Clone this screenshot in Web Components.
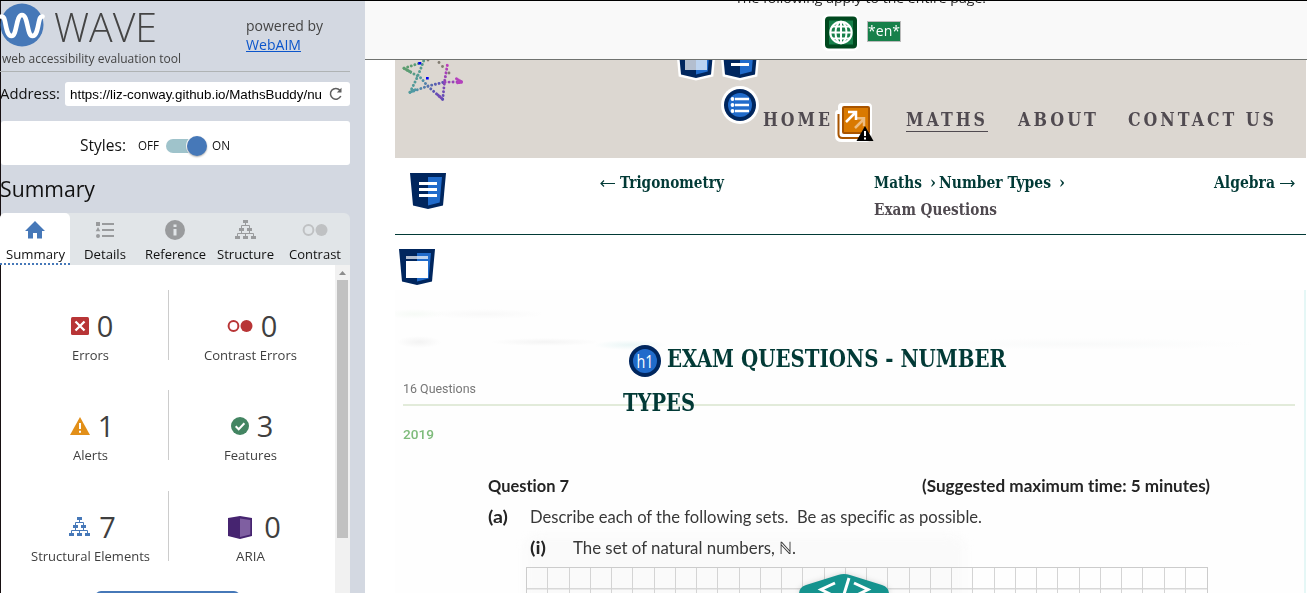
<!DOCTYPE html>
<html lang="en">
<head>
<meta charset="utf-8">
<title>WAVE Web Accessibility Evaluation Tool</title>
<style>
html,body{margin:0;height:100%;overflow:hidden;background:#fff}
body{font-family:"Open Sans","Liberation Sans",sans-serif;color:#111}
</style>
</head>
<body>
<wave-app></wave-app>
<script>
const shadow=(el,html)=>{const t=document.createElement('template');t.innerHTML=html;el.attachShadow({mode:'open'}).appendChild(t.content.cloneNode(true));};

/* A single line of text, condensed or expanded to the width in its "w" attribute. */
class FitText extends HTMLElement{
  connectedCallback(){
    if(this.shadowRoot)return;
    shadow(this,`<style>:host{display:inline-block;white-space:pre;flex:none}span{display:inline-block;transform-origin:0 50%;white-space:pre}:host([line]) span{text-decoration:underline}</style><span><slot></slot></span>`);
    const w=+this.getAttribute('w'),s=this.shadowRoot.querySelector('span');
    const n=s.getBoundingClientRect().width;
    this.style.width=w+'px';
    s.style.transform='scaleX('+w/n+')';
  }
}

const tree='<path d="M9 0h5v3H9zM5 8h5v3H5zM13 8h5v3h-5zM1 16h5v3H1zM9 16h5v3H9zM17 16h5v3h-5z"/><path d="M11.500 3v2.500M7.500 8V5.500h8V8M3.500 16v-2.500h16V16M11.500 16v-2.500M7.500 11v2.500M15.500 11v2.500" fill="none" stroke="currentColor" stroke-width="1"/>';
const shield='<path d="M0 0h36l-3 32.500L18 36 3 32.500z" fill="#00265e"/><path d="M18 4h14l-2.300 25.500L18 32.500z" fill="#206bcb"/>';
const wshield='<path d="M0 0h36l-3 32.500L18 36 3 32.500z" fill="#fff" stroke="#fff" stroke-width="5"/>'+shield;
const lines='<path d="M9 10.500h18M9 16.500h18M9 22.500h18" stroke="#fff" stroke-width="3"/>';
/* name: [width, height, drawing] */
const icons={
 logo:[44,44,'<circle cx="22" cy="22" r="21.500" fill="#4678b8"/><path d="M1.500 13.500C4 13 4.500 16 5.300 20c1.300 7 2.500 13 6.200 13 5.800 0 4.200-21 10.500-21s4.700 21 10.500 21c3.700 0 4.900-6 6.200-13 .8-4 1.300-7 3.800-6.500" fill="none" stroke="#fff" stroke-width="4.600" stroke-linecap="round"/>'],
 reload:[14,14,'<path d="M11.800 9A5.400 5.400 0 1 1 10.900 3.200" fill="none" stroke="#5f5f5f" stroke-width="1.500"/><path d="M12.500 .8v4.700H7.800z" fill="#5f5f5f"/>'],
 home:[20,18,'<path d="M10 0 0 10h3v7.500h5V12h4v5.500h5V10h3z" fill="#4678b8"/>'],
 list:[20,18,'<g fill="#999b9d"><path d="M1 1h4v4H1zM3 6l2.300 4.300H.7z"/><circle cx="3" cy="15" r="2"/><path d="M7 2h12v2H7zM7 8h12v2H7zM7 14h12v2H7z"/></g>'],
 info:[20,20,'<circle cx="10" cy="10" r="10" fill="#999b9d"/><path d="M8.500 4.500h3v2.500h-3zM8.500 9h3v6.500h-3z" fill="#e1e5e8"/>'],
 tree:[23,20,`<g fill="currentColor">${tree}</g>`],
 contrast:[26,12,'<circle cx="6.500" cy="6" r="4.900" fill="none" stroke="currentColor" stroke-width="2"/><circle cx="19.500" cy="6" r="6" fill="currentColor"/>'],
 error:[18,18,'<rect width="18" height="18" rx="1.500" fill="#b83536"/><path d="m4.500 4.500 9 9m0-9-9 9" stroke="#fff" stroke-width="2.300"/>'],
 alert:[20,18,'<path d="M10 0 20 18H0z" fill="#e28f18"/><path d="M9 6h2v6H9zM9 13.700h2v2H9z" fill="#fff"/>'],
 check:[18,18,'<circle cx="9" cy="9" r="9" fill="#438562"/><path d="m4.700 9.200 3 3 5.700-6" fill="none" stroke="#fff" stroke-width="2"/>'],
 aria:[24,23,'<path d="M0 2 12 0l12 2v18l-12 3L0 20z" fill="#462470"/><path d="m12 2.500 10.300 1.500v14.500L12 21z" fill="#7f5fa1"/>'],
 globe:[37,37,'<rect x="0" y="0" width="37" height="37" rx="6" fill="#fff"/><rect x="3" y="2.500" width="32" height="32" rx="4" fill="#01491f"/><rect x="7" y="6.500" width="24" height="24" fill="#17804a"/><g fill="none" stroke="#fff" stroke-width="2"><circle cx="19" cy="18.500" r="10.700"/><ellipse cx="19" cy="18.500" rx="5.500" ry="10.700"/><path d="M19 8v21M8 18.500h22M10 12.500h18M10 24.500h18"/></g>'],
 figure:[36,36,wshield+'<path d="M7 8h22v20H7z" fill="#fff" opacity=".7"/>'],
 nav:[36,36,wshield+lines],
 header:[36,36,shield+lines],
 main:[36,36,shield+'<path d="M7 7h22v3H7z" fill="#fff" opacity=".7"/><path d="M7 12h22v17H7z" fill="#fff"/>'],
 ul:[38,38,'<circle cx="19" cy="19" r="19" fill="#fff"/><circle cx="19" cy="19" r="16" fill="#00265e"/><circle cx="19" cy="19" r="12" fill="#206bcb"/><path d="M14 13h14M14 19h14M14 25h14" stroke="#fff" stroke-width="2.300"/><g fill="#fff"><circle cx="11.500" cy="13" r="1.900"/><circle cx="11.500" cy="19" r="1.900"/><circle cx="11.500" cy="25" r="1.900"/></g>'],
 link:[40,41,'<path d="M1 12q0-4 3-4V5q0-4 4-4h26q4 0 4 4v26q0 3-2 4v3q-1 2-4 2H8q-7 0-7-6z" fill="#fff"/><path d="M4.500 12v20q0 4 4 4h22" fill="none" stroke="#a85400" stroke-width="2"/><rect x="8" y="4" width="28" height="28" rx="2" fill="#a85400"/><rect x="10" y="6" width="24" height="24" fill="#d97900"/><g fill="none" stroke="#fff" stroke-width="2.500"><path d="M12 20 21.500 10.500M14 10h8v8"/><path d="m21 26 9.500-9.500M22 16.300h8v8" opacity=".5"/></g><path d="M31 24 39.500 39h-17z" fill="#000"/><path d="M30 29h2v5h-2zM30 35.500h2v2h-2z" fill="#fff"/>'],
 h1:[32,32,'<circle cx="16" cy="16" r="16" fill="#00265e"/><circle cx="16" cy="16" r="12" fill="#206bcb"/><text x="16" y="22.500" text-anchor="middle" font-family="Open Sans" font-weight="400" font-size="18" textLength="17" lengthAdjust="spacingAndGlyphs" fill="#fff">h1</text>'],
 star:[64,44,'<defs><linearGradient id="g" gradientUnits="userSpaceOnUse" x1="14" y1="2" x2="54" y2="30"><stop offset="0" stop-color="#5d9d70"/><stop offset=".35" stop-color="#509aa4"/><stop offset=".7" stop-color="#5b50b4"/><stop offset="1" stop-color="#8a44b8"/></linearGradient><linearGradient id="m" gradientUnits="userSpaceOnUse" x1="0" y1="3" x2="0" y2="39"><stop offset="0" stop-color="#c23abb"/><stop offset="1" stop-color="#5b50b4"/></linearGradient></defs><g fill="none" stroke="url(#g)" stroke-width="2.900" stroke-linecap="round" stroke-dasharray=".1 3.700"><path d="M5 8.300 21 3M5 8.300 22 18l6.500 8 15.200 13.300M11 32.300 17 20l5-12 3-8M11 32.300 29 26l17-4"/><path d="m5 8.300 7 4M11 32.300l6-3M39 35l4.700 4.300" stroke-dasharray=".1 1.800"/></g><g fill="none" stroke="url(#m)" stroke-width="2.900" stroke-linecap="round"><path d="M43.700 39.300 45.500 22 48.700 3" stroke-dasharray=".1 3.700"/><path d="M46 22.200 62.500 21.700" stroke="#9744b8" stroke-dasharray=".1 3.900"/><path d="m62.500 21.700-6.500-3.700M62.500 22.300l-4 .5" stroke="#b441bc" stroke-dasharray=".1 1.800"/></g><g fill="#817b70"><circle cx="29" cy="0" r="1.400"/><circle cx="40" cy="2.500" r="1.400"/><circle cx="43.500" cy="6.500" r="1.400"/><circle cx="50" cy="13" r="1.400"/></g><path d="M19.300 2h3v2.500h-3zM27 17h2.700v2.500H27z" fill="#00e"/>'],
 code:[92,31,'<path d="M1 31V21q0-7 7-9L40 2q6-2 12 0l32 10q7 2 7 9v10z" fill="#15938e"/><path d="m37 10-14 6.500 14 7M56 10l14 6.500-14 7M51 5l-8 26" fill="none" stroke="#fff" stroke-width="3"/>'],
 left:[17,27,'<path d="M2 14.500h14M5 11.500l-3 3 3 3" fill="none" stroke="currentColor" stroke-width="1.200"/>'],
 up:[15,15,'<path d="M4 10h7L7.500 6z" fill="#8c8c8c"/>']
};
class WaveIcon extends HTMLElement{
  connectedCallback(){
    if(this.shadowRoot)return;
    const [w,h,d]=icons[this.getAttribute('name')];
    shadow(this,`<style>:host{display:block;flex:none;width:${w}px;height:${h}px}svg{display:block;overflow:visible}</style><svg width="${w}" height="${h}" viewBox="0 0 ${w} ${h}">${d}</svg>`);
  }
}

class ToolTab extends HTMLElement{
  connectedCallback(){
    shadow(this,`<style>
:host{display:flex;flex-direction:column;align-items:center;width:70px;height:52px;box-sizing:border-box;color:#999b9d}
:host([active]){background:#fff;border-radius:5px 5px 0 0;border-bottom:2px dotted #4678b8}
:host([pale]){color:#bfc1c3}
.i{height:36px;display:flex;align-items:center;flex:none;padding-bottom:2px;box-sizing:border-box}
fit-text{font-size:13px;line-height:11px;color:#111}</style>
<div class="i"><wave-icon name="${this.getAttribute('icon')}"></wave-icon></div><fit-text w="${this.getAttribute('w')}">${this.getAttribute('label')}</fit-text>`);
  }
}

class ResultCell extends HTMLElement{
  connectedCallback(){
    shadow(this,`<style>
:host{display:flex;flex-direction:column;align-items:center;height:70px;box-sizing:border-box;color:#3f3f3f}
.n{display:flex;align-items:center;height:57px;flex:none;padding:15px 0 0 ${this.getAttribute('shift')||5}px;gap:${this.getAttribute('gap')||8}px;box-sizing:border-box;font-size:29px;line-height:42px}
wave-icon{color:${this.getAttribute('tint')||'#000'}}
fit-text{font-size:13px;line-height:16px;margin-left:1px}</style>
<div class="n"><wave-icon name="${this.getAttribute('icon')}"></wave-icon><span>${this.getAttribute('count')}</span></div><fit-text w="${this.getAttribute('w')}">${this.getAttribute('label')}</fit-text>`);
  }
}

class ToolPanel extends HTMLElement{
  connectedCallback(){
    shadow(this,`<style>
:host{display:block;background:#d3d8e1;width:365px;height:593px;overflow:hidden;box-sizing:border-box;box-shadow:inset 1px 0 #171012}
.in{width:350px;display:flex;flex-direction:column;height:593px}
.brand{height:71px;border-bottom:1px solid #afb3b4;display:flex;box-sizing:content-box;color:#444}
.left{width:246px}
.logo{display:flex;height:48px;padding-top:3px;box-sizing:border-box}
.logo fit-text{font-weight:300;font-size:40px;line-height:47px;margin-left:10px}
.tag{font-size:12.500px;line-height:22px;padding-left:2px;height:20px}
.by{padding-top:16px;font-size:14px;line-height:19px}
.by a{color:#0b55cb}
.addr{display:flex;align-items:center;margin-top:10px;height:24px;font-size:14.500px;line-height:18px;gap:5px}
.box{width:285px;height:24px;box-sizing:border-box;background:#fff;border-radius:3px;display:flex;align-items:center;justify-content:space-between;padding:0 7px 0 5px;font:13.500px "Liberation Sans",sans-serif;color:#000}
.styles{margin:15px 0 0 1px;height:44px;background:#fff;border-radius:3px;display:flex;align-items:center;padding-left:79px;font-size:15.500px;padding-top:5px;box-sizing:border-box}
.styles>fit-text{margin-top:-1px}
.styles .s{font-size:12px}
.sw{width:36px;height:14px;border-radius:7px;background:#9fc3cb;margin:0 10px 0 7px;display:flex;align-items:center;justify-content:flex-end;box-sizing:border-box}
.knob{width:20px;height:20px;border-radius:50%;background:#4678b8;margin-right:-5px;flex:none;box-shadow:0 1px 2px #0005,0 0 0 1px #fff}
h2{font-weight:400;font-size:22px;line-height:46px;height:48px;margin:0}
.tabs{display:flex;background:#e1e5e8;border-radius:6px 6px 0 0;height:52px;flex:none}
.body{display:flex;height:328px;background:#fff;flex:none;margin-left:1px;overflow:hidden}
.grid{width:334px;display:grid;grid-template-columns:158px 161px;grid-template-rows:70px 70px 71px 30px;row-gap:30px;align-items:end;padding:25px 0 0 10px;box-sizing:border-box;align-content:start}
.grid>:nth-child(-n+6):nth-child(odd){border-right:1px solid #ccc}
.btn{grid-column:1/3;justify-self:center;width:145px;height:30px;background:#4678b8;border-radius:6px;margin:0 0 0 -6px}
.bar{width:15px;background:#f1f1f1;display:flex;flex-direction:column;align-items:center}
.bar div{width:11px;height:258px;background:#c1c1c1}
</style>
<div class="in">
<div class="brand"><div class="left"><div class="logo"><wave-icon name="logo"></wave-icon><fit-text w="103">WAVE</fit-text></div><div class="tag"><fit-text w="179">web accessibility evaluation tool</fit-text></div></div>
<div class="by"><fit-text w="77">powered by</fit-text><br><a><fit-text line w="55">WebAIM</fit-text></a></div></div>
<div class="addr"><fit-text w="60">Address:</fit-text><div class="box"><fit-text w="252">https://liz-conway.github.io/MathsBuddy/nu</fit-text><wave-icon name="reload"></wave-icon></div></div>
<div class="styles"><fit-text w="46">Styles:</fit-text><span class="s" style="margin-left:12px"><fit-text w="21">OFF</fit-text></span><div class="sw"><div class="knob"></div></div><span class="s"><fit-text w="18">ON</fit-text></span></div>
<h2><fit-text w="95">Summary</fit-text></h2>
<div class="tabs"><tool-tab active icon="home" label="Summary" w="59"></tool-tab><tool-tab icon="list" label="Details" w="42"></tool-tab><tool-tab icon="info" label="Reference" w="61"></tool-tab><tool-tab icon="tree" label="Structure" w="57"></tool-tab><tool-tab pale icon="contrast" label="Contrast" w="52"></tool-tab></div>
<div class="body"><div class="grid">
<result-cell icon="error" count="0" label="Errors" w="37"></result-cell><result-cell icon="contrast" tint="#b83536" count="0" label="Contrast Errors" w="93"></result-cell>
<result-cell icon="alert" count="1" label="Alerts" w="35"></result-cell><result-cell icon="check" count="3" label="Features" w="53"></result-cell>
<result-cell icon="tree" tint="#4678b8" count="7" label="Structural Elements" w="119"></result-cell><result-cell icon="aria" gap="12" shift="10" count="0" label="ARIA" w="29"></result-cell>
<div class="btn"></div></div>
<div class="bar"><wave-icon name="up"></wave-icon><div></div></div></div>
</div>`);
  }
}

class PageBar extends HTMLElement{
  connectedCallback(){
    shadow(this,`<style>
:host{display:flex;flex-direction:column;height:60px;box-sizing:border-box;background:#f9f9f9;border-bottom:1px solid #707370;overflow:hidden;position:relative;z-index:2}
.t{margin:-12px 0 0 370px;height:20px;font-size:13.500px;line-height:20px;color:#222}
.r{display:flex;margin:6px 0 0 457px;gap:8px;align-items:center}
b{font-weight:400;font-size:14px;line-height:18px;background:#17804a;border:1px solid #bbb;color:#fff;height:19px;display:flex;margin-top:-2px}
</style><div class="t"><fit-text w="251">The following apply to the entire page:</fit-text></div><div class="r"><wave-icon name="globe"></wave-icon><b><fit-text w="32">*en*</fit-text></b></div>`);
  }
}

class SiteHeader extends HTMLElement{
  connectedCallback(){
    shadow(this,`<style>
:host{display:block;position:relative;margin-left:30px;height:98px;background:#dcd7d1;color:#504a50;font:bold 18.500px/28px "DejaVu Serif",serif;width:911px}
.logo{padding-left:4px}
nav{display:flex;align-items:flex-start;margin:2px 0 0 368px;letter-spacing:3.500px}
.u{border-bottom:1px solid #504a50}
.tags{position:absolute;top:-18px;left:283px;display:grid;grid-template-columns:36px 36px;column-gap:8px}
.ul{position:absolute;left:326px;top:26px}
</style><div class="logo"><wave-icon name="star"></wave-icon></div>
<nav><fit-text w="70">HOME</fit-text><wave-icon name="link" style="margin:-4px 0 0 1px"></wave-icon><span class="u" style="margin-left:32px;height:25px"><fit-text w="82">MATHS</fit-text></span><fit-text w="81" style="margin-left:30px">ABOUT</fit-text><fit-text w="149" style="margin-left:29px">CONTACT US</fit-text></nav>
<div class="tags"><wave-icon name="figure"></wave-icon><wave-icon name="nav"></wave-icon></div><wave-icon class="ul" name="ul"></wave-icon>`);
  }
}

class CrumbNav extends HTMLElement{
  connectedCallback(){
    shadow(this,`<style>
:host{display:flex;margin-left:30px;width:911px;height:77px;box-sizing:border-box;border-bottom:1px solid #023a36;color:#023a36;font:bold 16.500px/27px "DejaVu Serif",serif;padding:11px 0 0 15px}
.h{margin-top:4px}
.a{display:flex;gap:4px}
.flip{transform:scaleX(-1)}
.c{display:flex;flex-direction:column;width:192px;margin-left:150px}
.c div{display:flex}.g{color:#504a50}
</style><wave-icon class="h" name="header"></wave-icon>
<div class="a" style="margin-left:153px"><wave-icon name="left"></wave-icon><fit-text w="104">Trigonometry</fit-text></div>
<div class="c"><div><fit-text w="48">Maths</fit-text><fit-text w="6" style="margin:0 3px 0 8px">›</fit-text><fit-text w="112">Number Types</fit-text><fit-text w="6" style="margin-left:8px">›</fit-text></div><fit-text class="g" w="123">Exam Questions</fit-text></div>
<div class="a" style="margin-left:148px"><fit-text w="61">Algebra</fit-text><wave-icon class="flip" name="left"></wave-icon></div>`);
  }
}

class ExamPaper extends HTMLElement{
  connectedCallback(){
    shadow(this,`<style>
:host{display:block;position:relative;margin-left:30px;width:911px;height:358px;color:#333;font-family:Lato,"Open Sans",sans-serif}
.main{padding:14px 0 0 4px;height:41px}
.scan{position:relative;width:909px;height:303px;border-right:2px solid #e5f7f6;background:#fefefe;overflow:hidden}
.faint{height:77px;background:
 radial-gradient(ellipse 36px 5px at 235px 55px,#eaf6f6,transparent),
 radial-gradient(ellipse 22px 6px at 24px 52px,#f3f3f3,transparent),
 radial-gradient(ellipse 55px 4px at 150px 52px,#f4f4f4,transparent),
 radial-gradient(ellipse 170px 6px at 690px 54px,#f9fafa,transparent),
 radial-gradient(ellipse 30px 5px at 20px 24px,#f6faf6,transparent),
 radial-gradient(ellipse 60px 5px at 90px 24px,#f8f8f8,transparent)}
.q{padding:13px 0 0 8px;height:26px;box-sizing:border-box;filter:blur(.35px);font:400 12.500px/18px Roboto,sans-serif;color:#777}
.rule{height:1.500px;background:#e2ebda;margin:11px 9px 0 8px}
.y{padding:20px 0 0 8px;font:500 13px/18px Roboto,sans-serif;color:#7ebb7b;filter:blur(.35px);height:32px;box-sizing:border-box}
.body{filter:blur(.4px);padding:32px 0 0 93px;font-size:17px;line-height:31px;color:#383838;font-variant-ligatures:none}
.body b{color:#242424}
.l{display:flex;height:31px}
.haze{position:absolute;left:130px;top:245px;width:440px;height:90px;background:#fafafa;border-radius:14px;filter:blur(5px)}
.cells{margin-left:38px;width:682px;height:40px;box-sizing:border-box;border:1.500px solid #ccc;border-bottom:0;background:linear-gradient(#d8d8d8,#d8d8d8) 0 20px/100% 1.500px no-repeat;margin-top:4px;display:grid;grid-template-columns:repeat(32,1fr)}
.cells i{border-right:1.500px solid #d4d4d4}.cells i:last-child{border:0}
.title{position:absolute;left:228px;top:102px;width:395px;color:#023a36;font:bold 25px/44px "DejaVu Serif",serif;letter-spacing:0}
.title div{display:flex}.title wave-icon{margin:8px 6px 0 6px}
.code{position:absolute;left:403px;top:338px;height:20px;overflow:hidden;filter:drop-shadow(0 1px 3px #0003)}
</style>
<div class="main"><wave-icon name="main"></wave-icon></div>
<div class="scan"><div class="haze"></div><div class="faint"></div>
<div class="q"><fit-text w="73">16 Questions</fit-text></div><div class="rule"></div><div class="y"><fit-text w="31">2019</fit-text></div>
<div class="body"><div class="l"><b><fit-text w="81">Question 7</fit-text></b><b style="margin-left:353px"><fit-text w="288">(Suggested maximum time: 5 minutes)</fit-text></b></div>
<div class="l"><b><fit-text w="20">(a)</fit-text></b><fit-text w="452" style="margin-left:22px">Describe each of the following sets.  Be as specific as possible.</fit-text></div>
<div class="l"><b style="margin-left:42px"><fit-text w="16">(i)</fit-text></b><fit-text w="223" style="margin-left:27px">The set of natural numbers, ℕ.</fit-text></div>
<div class="cells">${'<i></i>'.repeat(32)}</div></div></div>
<div class="title"><div><wave-icon name="h1"></wave-icon><fit-text w="339">EXAM QUESTIONS - NUMBER</fit-text></div><fit-text w="72">TYPES</fit-text></div>
<wave-icon class="code" name="code"></wave-icon>`);
  }
}

class WaveApp extends HTMLElement{
  connectedCallback(){
    shadow(this,`<style>
:host{display:grid;grid-template-columns:365px 942px;width:1307px;height:593px;overflow:hidden;position:relative;background:#fff}
:host::after{content:"";position:absolute;left:0;top:0;width:1307px;height:1px;background:#000;z-index:9}
.page{height:593px;overflow:hidden}
</style><tool-panel></tool-panel><div class="page"><page-bar></page-bar><site-header></site-header><crumb-nav></crumb-nav><exam-paper></exam-paper></div>`);
  }
}
customElements.define('fit-text',FitText);
customElements.define('wave-icon',WaveIcon);
customElements.define('tool-tab',ToolTab);
customElements.define('result-cell',ResultCell);
customElements.define('tool-panel',ToolPanel);
customElements.define('page-bar',PageBar);
customElements.define('site-header',SiteHeader);
customElements.define('crumb-nav',CrumbNav);
customElements.define('exam-paper',ExamPaper);
customElements.define('wave-app',WaveApp);
</script>
</body>
</html>
